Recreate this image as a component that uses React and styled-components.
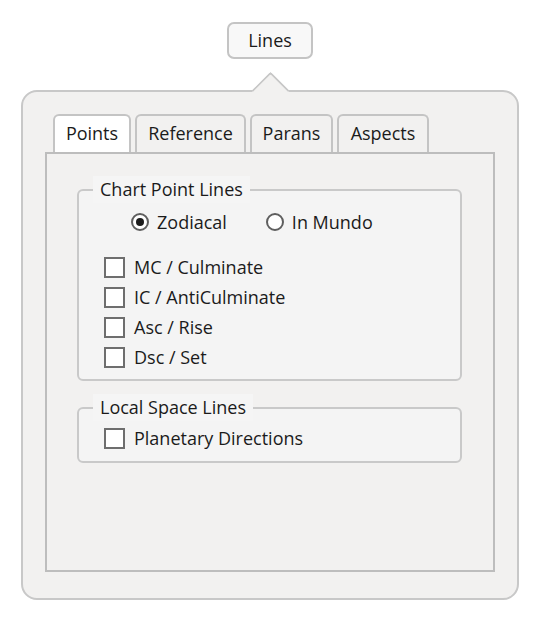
import React, { useState } from "react";
import styled, { createGlobalStyle } from "styled-components";

const GlobalStyle = createGlobalStyle`
  html, body {
    margin: 0;
    background: #ffffff;
  }
  body {
    font-family: "Open Sans", "Noto Sans", "DejaVu Sans", sans-serif;
    color: #1b1b1b;
  }
`;

const Page = styled.div`
  padding: 22px 0 0 21px;
`;

const Wrapper = styled.div`
  width: 498px;
  display: flex;
  flex-direction: column;
  align-items: center;
`;

const MenuButton = styled.button`
  width: 86px;
  height: 37px;
  box-sizing: border-box;
  border: 2px solid #c4c4c4;
  border-radius: 7px;
  background: #f8f8f8;
  font-family: inherit;
  font-size: 18px;
  color: #1b1b1b;
  padding: 0 0 2px;
`;

const Popup = styled.div`
  position: relative;
  margin-top: 31px;
  width: 498px;
  height: 510px;
  box-sizing: border-box;
  border: 2px solid #c8c8c8;
  border-radius: 16px;
  background: #f2f1f0;
  padding: 22px 22px 26px;
  display: flex;
  flex-direction: column;

  &::before {
    content: "";
    position: absolute;
    top: -15px;
    left: calc(50% - 13px);
    width: 25px;
    height: 25px;
    background: #f2f1f0;
    border-top: 2px solid #c8c8c8;
    border-left: 2px solid #c8c8c8;
    border-top-left-radius: 3px;
    transform: rotate(45deg);
  }
`;

const TabBar = styled.div`
  display: flex;
  gap: 4px;
  padding-left: 8px;
`;

const Tab = styled.div`
  width: ${(p) => p.$width}px;
  height: 38px;
  box-sizing: border-box;
  padding-bottom: 2px;
  display: flex;
  align-items: center;
  justify-content: center;
  border: 2px solid #c4c4c4;
  border-bottom: none;
  border-radius: 6px 6px 0 0;
  background: ${(p) => (p.$active ? "#ffffff" : "#f2f1f0")};
  font-size: 18px;
  color: #1b1b1b;
`;

const Panel = styled.div`
  flex: 1;
  border: 2px solid #bdbdbd;
  background: #f2f1f0;
  padding: 22px 31px 0 30px;
  display: flex;
  flex-direction: column;
  gap: 13px;
`;

const Group = styled.fieldset`
  margin: 0;
  border: 2px solid #c9c9c9;
  border-radius: 6px;
  background: #f4f4f4;
  padding: 0 0 ${(p) => p.$bottom}px;
  min-width: 0;
`;

const Legend = styled.legend`
  margin-left: 14px;
  padding: 2px 7px 3px;
  background: #f5f5f5;
  font-size: 18px;
  color: #1b1b1b;
  line-height: 22px;
`;

const RadioRow = styled.div`
  display: flex;
  gap: 39px;
  padding: 8px 0 19px 52px;
`;

const Option = styled.label`
  display: flex;
  align-items: center;
  gap: ${(p) => p.$gap}px;
  font-size: 18px;
  line-height: 22px;
  color: #1b1b1b;
  cursor: default;
`;

const RadioCircle = styled.span`
  width: 18px;
  height: 18px;
  box-sizing: border-box;
  border: 2px solid #5f5f5f;
  border-radius: 50%;
  background: #ffffff;
  display: flex;
  align-items: center;
  justify-content: center;

  &::after {
    content: "";
    width: 8px;
    height: 8px;
    border-radius: 50%;
    background: ${(p) => (p.$checked ? "#1b1b1b" : "transparent")};
  }
`;

const CheckList = styled.div`
  display: flex;
  flex-direction: column;
  padding: ${(p) => p.$top || 0}px 0 0 25px;
`;

const CheckRow = styled(Option)`
  height: 30px;
`;

const Box = styled.span`
  width: 21px;
  height: 21px;
  box-sizing: border-box;
  border: 2px solid #6e6e6e;
  background: #ffffff;
`;

const Radio = ({ checked, children, onClick }) => (
  <Option $gap={8} onClick={onClick}>
    <RadioCircle $checked={checked} />
    {children}
  </Option>
);

const Check = ({ children }) => (
  <CheckRow $gap={9}>
    <Box />
    {children}
  </CheckRow>
);

const tabs = [
  { name: "Points", width: 78 },
  { name: "Reference", width: 111 },
  { name: "Parans", width: 83 },
  { name: "Aspects", width: 92 },
];

const pointLines = ["MC / Culminate", "IC / AntiCulminate", "Asc / Rise", "Dsc / Set"];

export default function App() {
  const [mode, setMode] = useState("zodiacal");

  return (
    <Page>
      <GlobalStyle />
      <Wrapper>
        <MenuButton>Lines</MenuButton>
        <Popup>
          <TabBar>
            {tabs.map((t, i) => (
              <Tab key={t.name} $width={t.width} $active={i === 0}>
                {t.name}
              </Tab>
            ))}
          </TabBar>
          <Panel>
            <Group $bottom={7}>
              <Legend>Chart Point Lines</Legend>
              <RadioRow>
                <Radio checked={mode === "zodiacal"} onClick={() => setMode("zodiacal")}>
                  Zodiacal
                </Radio>
                <Radio checked={mode === "mundo"} onClick={() => setMode("mundo")}>
                  In Mundo
                </Radio>
              </RadioRow>
              <CheckList>
                {pointLines.map((l) => (
                  <Check key={l}>{l}</Check>
                ))}
              </CheckList>
            </Group>
            <Group $bottom={8}>
              <Legend>Local Space Lines</Legend>
              <CheckList $top={2}>
                <Check>Planetary Directions</Check>
              </CheckList>
            </Group>
          </Panel>
        </Popup>
      </Wrapper>
    </Page>
  );
}
